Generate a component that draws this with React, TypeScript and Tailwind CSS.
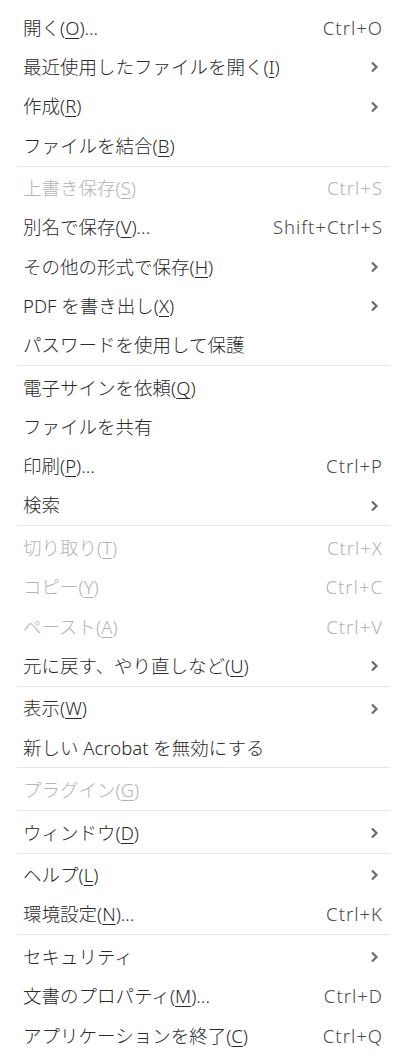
import React from "react";

type Item = {
  label: string;
  key?: string;
  suffix?: string;
  shortcut?: string;
  sub?: boolean;
  disabled?: boolean;
};

const groups: Item[][] = [
  [
    { label: "開く", key: "O", suffix: "...", shortcut: "Ctrl+O" },
    { label: "最近使用したファイルを開く", key: "I", sub: true },
    { label: "作成", key: "R", sub: true },
    { label: "ファイルを結合", key: "B" },
  ],
  [
    { label: "上書き保存", key: "S", shortcut: "Ctrl+S", disabled: true },
    { label: "別名で保存", key: "V", suffix: "...", shortcut: "Shift+Ctrl+S" },
    { label: "その他の形式で保存", key: "H", sub: true },
    { label: "PDF を書き出し", key: "X", sub: true },
    { label: "パスワードを使用して保護" },
  ],
  [
    { label: "電子サインを依頼", key: "Q" },
    { label: "ファイルを共有" },
    { label: "印刷", key: "P", suffix: "...", shortcut: "Ctrl+P" },
    { label: "検索", sub: true },
  ],
  [
    { label: "切り取り", key: "T", shortcut: "Ctrl+X", disabled: true },
    { label: "コピー", key: "Y", shortcut: "Ctrl+C", disabled: true },
    { label: "ペースト", key: "A", shortcut: "Ctrl+V", disabled: true },
    { label: "元に戻す、やり直しなど", key: "U", sub: true },
  ],
  [
    { label: "表示", key: "W", sub: true },
    { label: "新しい Acrobat を無効にする" },
  ],
  [{ label: "プラグイン", key: "G", disabled: true }],
  [{ label: "ウィンドウ", key: "D", sub: true }],
  [
    { label: "ヘルプ", key: "L", sub: true },
    { label: "環境設定", key: "N", suffix: "...", shortcut: "Ctrl+K" },
  ],
  [
    { label: "セキュリティ", sub: true },
    { label: "文書のプロパティ", key: "M", suffix: "...", shortcut: "Ctrl+D" },
    { label: "アプリケーションを終了", key: "C", shortcut: "Ctrl+Q" },
  ],
];

function Chevron({ disabled }: { disabled?: boolean }) {
  return (
    <svg width="9" height="12" viewBox="0 0 9 12" className="mr-[4px]">
      <polyline
        points="2,1.5 6.5,6 2,10.5"
        fill="none"
        stroke={disabled ? "#c4c4c4" : "#6b6b6b"}
        strokeWidth="2.2"
      />
    </svg>
  );
}

function Row({ item }: { item: Item }) {
  const color = item.disabled ? "text-[#b4b4b4]" : "text-[#2a2a2a]";
  const scColor = item.disabled ? "text-[#b4b4b4]" : "text-[#4a4a4a]";
  return (
    <div className="flex h-[39.25px] items-center justify-between pl-[23px] pr-[21px] leading-none">
      <span className={`whitespace-nowrap ${color}`}>
        {item.label}
        {item.key && (
          <>
            (<span className="underline decoration-1 underline-offset-[3px]">{item.key}</span>)
          </>
        )}
        {item.suffix}
      </span>
      {item.shortcut && (
        <span className={`whitespace-nowrap tracking-[1px] ${scColor}`}>{item.shortcut}</span>
      )}
      {item.sub && <Chevron disabled={item.disabled} />}
    </div>
  );
}

export default function App() {
  return (
    <div
      className="w-[404px] h-[1062px] bg-white pt-[8.5px] text-[18.5px] font-light overflow-hidden"
      style={{ fontFamily: '"Noto Sans", "Noto Sans CJK JP", sans-serif' }}
    >
      {groups.map((g, gi) => (
        <div key={gi}>
          {gi > 0 && (
            <div className="h-[3.3px] pl-[17px] pr-[14px]">
              <div className="h-px bg-[#e6e6e6]" />
            </div>
          )}
          {g.map((item, ii) => (
            <Row key={ii} item={item} />
          ))}
        </div>
      ))}
    </div>
  );
}
